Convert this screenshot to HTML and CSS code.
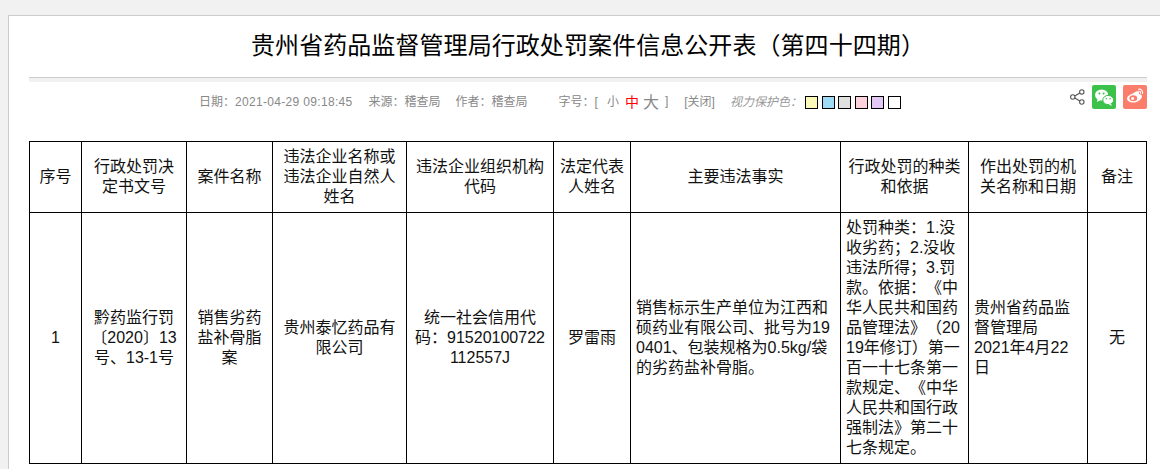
FILE: index.html
```html
<!DOCTYPE html>
<html lang="zh-CN">
<head>
<meta charset="utf-8">
<title>贵州省药品监督管理局行政处罚案件信息公开表（第四十四期）</title>
<link rel="stylesheet" href="styles.css">
</head>
<body>
<main class="card">
  <h1 class="title">贵州省药品监督管理局行政处罚案件信息公开表（第四十四期）</h1>
  <div class="meta">
    <div class="info">
      <span class="date">日期：<span class="num">2021-04-29 09:18:45</span></span>
      <span class="source">来源：稽查局</span>
      <span class="author">作者：稽查局</span>
      <span class="size">字号：[</span>
      <span class="sz-s">小</span>
      <span class="sz-m">中</span>
      <span class="sz-l">大</span>
      <span class="sz-end">]</span>
      <span class="close">[关闭]</span>
      <em class="eye">视力保护色：</em>
      <div class="swatches">
        <i class="sw sw1"></i><i class="sw sw2"></i><i class="sw sw3"></i><i class="sw sw4"></i><i class="sw sw5"></i><i class="sw sw6"></i>
      </div>
    </div>
    <div class="share">
      <svg class="ic-share" width="15" height="16" viewBox="0 0 15 16" fill="none" stroke="#555" stroke-width="1.1">
        <circle cx="2.8" cy="8" r="2.2"/><circle cx="11.8" cy="2.9" r="2.2"/><circle cx="11.8" cy="13" r="2.2"/>
        <path d="M4.8 7 9.900 4M4.800 9l5.100 3"/>
      </svg>
      <svg class="ic-btn" width="24" height="24" viewBox="0 0 24 24">
        <rect width="24" height="24" rx="2" fill="#3cc14a"/>
        <ellipse cx="9.600" cy="10" rx="6.600" ry="5.600" fill="#fff"/>
        <path d="M5.600 13.500 5 17l3.600-2z" fill="#fff"/>
        <ellipse cx="16.200" cy="15" rx="5.400" ry="4.600" fill="#fff" stroke="#3cc14a" stroke-width="1"/>
        <path d="M19 18.400 19.800 21l-3-1.800z" fill="#fff"/>
        <circle cx="7.400" cy="8.400" r="1" fill="#3cc14a"/><circle cx="11.600" cy="8.400" r="1" fill="#3cc14a"/>
        <circle cx="14.400" cy="13.800" r=".8" fill="#3cc14a"/><circle cx="18" cy="13.800" r=".8" fill="#3cc14a"/>
      </svg>
      <svg class="ic-btn" width="24" height="24" viewBox="0 0 24 24">
        <rect width="24" height="24" rx="2" fill="#fb7d6b"/>
        <path d="M10.500 8.200c2.500-2 5-2.400 5.600-1.200.3.700.1 1.500-.2 2.300 1.800-.3 3 .5 3 1.900 0 3-4 6.300-8.700 6.300-3.600 0-6.200-1.700-6.200-4.200 0-1.700 2.700-3.800 6.500-5.100z" fill="#fff"/>
        <ellipse cx="10.300" cy="13.300" rx="3.900" ry="3" fill="#fb7d6b"/>
        <circle cx="9.600" cy="13.500" r="1.500" fill="#fff"/>
        <path d="M15.500 4.200c2.500-.5 4.600 1.600 4 4.200M15.800 6.300c1.200-.2 2 .7 1.800 1.800" fill="none" stroke="#fff" stroke-width="1.100" stroke-linecap="round"/>
      </svg>
    </div>
  </div>
  <table class="cases">
    <colgroup>
      <col class="c1"><col class="c2"><col class="c3"><col class="c4"><col class="c5"><col class="c6"><col class="c7"><col class="c8"><col class="c9"><col class="c10">
    </colgroup>
    <thead>
      <tr>
        <th>序号</th>
        <th>行政处罚决定书文号</th>
        <th>案件名称</th>
        <th>违法企业名称或违法企业自然人姓名</th>
        <th>违法企业组织机构代码</th>
        <th>法定代表人姓名</th>
        <th>主要违法事实</th>
        <th>行政处罚的种类和依据</th>
        <th>作出处罚的机关名称和日期</th>
        <th>备注</th>
      </tr>
    </thead>
    <tbody>
      <tr>
        <td class="ctr">1</td>
        <td class="ctr">黔药监行罚〔2020〕13号、13-1号</td>
        <td class="ctr">销售劣药盐补骨脂案</td>
        <td class="ctr">贵州泰忆药品有限公司</td>
        <td class="ctr">统一社会信用代码：91520100722112557J</td>
        <td class="ctr">罗雷雨</td>
        <td>销售标示生产单位为江西和硕药业有限公司、批号为190401、包装规格为0.5kg/袋的劣药盐补骨脂。</td>
        <td>处罚种类：1.没收劣药；2.没收违法所得；3.罚款。依据：《中华人民共和国药品管理法》（2019年修订）第一百一十七条第一款规定、《中华人民共和国行政强制法》第二十七条规定。</td>
        <td>贵州省药品监督管理局<br>2021年4月22日</td>
        <td class="ctr">无</td>
      </tr>
    </tbody>
  </table>
</main>
</body>
</html>
```
FILE: styles.css
```css
* { box-sizing: border-box; }
html, body { margin: 0; height: 100%; overflow: hidden; }
body {
  background: #f1f1f1;
  padding: 15px 0 0 8px;
  font-family: "Liberation Sans", "Noto Sans CJK SC", sans-serif;
  text-spacing-trim: space-all;
  font-feature-settings: "chws" 0;
}
.card {
  background: #fff;
  border: 1px solid #ccc;
  border-right: 0;
  border-bottom: 0;
  padding: 0 13px 0 20px;
  min-height: 500px;
}
.title {
  margin: 0;
  height: 62px;
  padding-top: 12px;
  font-size: 24px;
  line-height: 36px;
  font-weight: 400;
  letter-spacing: .07px;
  text-align: center;
  color: #000;
  border-bottom: 1px solid #ccc;
}
.meta {
  display: flex;
  justify-content: space-between;
  height: 63px;
  border-top: 4px solid #f1f1f1;
  color: #888;
  font-size: 12px;
}
.info {
  display: flex;
  align-items: center;
  height: 37px;
  padding-left: 170px;
  white-space: nowrap;
}
.num { letter-spacing: .32px; }
.source { margin-left: 16px; }
.author { margin-left: 15px; }
.size { margin-left: 31px; }
.sz-s { margin-left: 9px; }
.sz-m { margin-left: 6px; font-size: 14px; color: #f00; }
.sz-l { margin-left: 4px; font-size: 16px; }
.sz-end { margin-left: 6px; }
.close { margin-left: 16px; }
.eye { margin-left: 15px; color: #999; }
.swatches { display: flex; gap: 3.6px; margin: 4px 0 0 3px; }
.sw { display: block; width: 13px; height: 13px; border: 1px solid #000; }
.sw1 { background: #faf9b8; }
.sw2 { background: #a0dbf5; }
.sw3 { background: #e0e0e0; }
.sw4 { background: #fcd3dc; }
.sw5 { background: #e2c8f5; }
.sw6 { background: #fff; }
.share {
  display: flex;
  align-items: center;
  gap: 7px;
  height: 24px;
  margin-top: 3px;
}
.ic-share { margin-top: -1px; }
.cases {
  width: 1118px;
  table-layout: fixed;
  border-collapse: collapse;
  color: #111;
  font-size: 16px;
  line-height: 20px;
}
.cases th, .cases td {
  border: 1px solid #000;
  padding: 5px;
  vertical-align: middle;
  word-break: break-all;
  font-weight: 400;
}
.cases th, .ctr { text-align: center; }
.c1 { width: 52px; }
.c2 { width: 105px; }
.c3 { width: 86px; }
.c4 { width: 134px; }
.c5 { width: 147px; }
.c6 { width: 77px; }
.c7 { width: 210px; }
.c8 { width: 128px; }
.c9 { width: 119px; }
.c10 { width: 59px; }
```
